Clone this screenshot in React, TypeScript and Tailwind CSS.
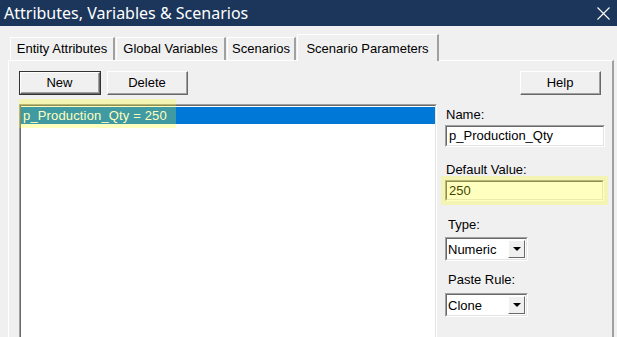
import React from "react";

const font = { fontFamily: '"Liberation Sans", Arial, sans-serif' };

function Raised({ children, w, def }: { children: React.ReactNode; w: string; def?: boolean }) {
  return (
    <div className={`${w} h-[24px] ${def ? "border border-[#333]" : ""} bg-[#f0f0f0]`}>
      <div className="w-full h-full border-t border-l border-t-white border-l-white border-b border-r border-b-[#696969] border-r-[#696969]">
        <div className="w-full h-full border-b border-r border-b-[#a0a0a0] border-r-[#a0a0a0] flex items-center justify-center text-[13px] text-black">
          {children}
        </div>
      </div>
    </div>
  );
}

function Sunken({ children, cls }: { children?: React.ReactNode; cls: string }) {
  return (
    <div className={`${cls} border-t border-l border-t-[#a0a0a0] border-l-[#a0a0a0] border-b border-r border-b-white border-r-white`}>
      <div className="w-full h-full border-t border-l border-t-[#696969] border-l-[#696969] border-b border-r border-b-[#e3e3e3] border-r-[#e3e3e3] bg-white">
        {children}
      </div>
    </div>
  );
}

function Select({ value }: { value: string }) {
  return (
    <Sunken cls="w-[83px] h-[24px]">
      <div className="flex h-full items-center pl-[1px] pr-[1px]">
        <span className="flex-1 text-[13px] text-black leading-none">{value}</span>
        <div className="w-[17px] h-[18px] bg-[#f0f0f0] border-t border-l border-t-white border-l-white border-b border-r border-b-[#696969] border-r-[#696969] flex items-center justify-center">
          <svg width="8" height="4" viewBox="0 0 8 4">
            <polygon points="0,0 8,0 4,4" fill="#000" />
          </svg>
        </div>
      </div>
    </Sunken>
  );
}

export default function App() {
  return (
    <div className="w-[617px] h-[337px] bg-[#f0f0f0] overflow-hidden flex flex-col" style={font}>
      <div className="h-[26px] bg-[#1b365a] flex items-center justify-between pl-[4px] pr-[7px] shrink-0">
        <span className="text-white text-[16px]" style={{ fontFamily: '"Noto Sans", "Liberation Sans", sans-serif' }}>
          Attributes, Variables &amp; Scenarios
        </span>
        <svg width="13" height="13" viewBox="0 0 13 13">
          <path d="M0.5 0.5 L12.5 12.5 M12.5 0.5 L0.5 12.5" stroke="#fff" strokeWidth="1.1" />
        </svg>
      </div>

      <div className="flex items-end h-[34px] pl-[10px] shrink-0">
        <div className="flex items-end h-[23px]">
          <div className="h-[23px] w-[105px] border-t border-l border-t-white border-l-white flex items-center justify-center text-[13px] text-black border-r-2 border-r-[#a0a0a0]">
            Entity Attributes
          </div>
          <div className="h-[23px] w-[110px] ml-[1px] border-t border-l border-t-white border-l-white flex items-center justify-center text-[13px] text-black border-r-2 border-r-[#a0a0a0]">
            Global Variables
          </div>
          <div className="h-[23px] w-[69px] ml-[1px] border-t border-l border-t-white border-l-white flex items-center justify-center text-[13px] text-black border-r-2 border-r-[#a0a0a0]">
            Scenarios
          </div>
        </div>
        <div className="h-[27px] w-[142px] ml-[1px] -mb-[1px] bg-[#f0f0f0] border-t border-l border-t-white border-l-white border-r-2 border-r-[#a0a0a0] flex items-start pt-[4px] justify-center text-[13px] text-black relative z-10">
          Scenario Parameters
        </div>
      </div>

      <div className="ml-[8px] w-[606px] flex-1 border-t border-l border-t-white border-l-white border-r-2 border-r-[#a0a0a0] flex pl-[10px] pt-[10px]">
        <div className="w-[418px] flex flex-col">
          <div className="flex gap-[6px]">
            <Raised w="w-[82px]" def>New</Raised>
            <Raised w="w-[81px]">Delete</Raised>
          </div>
          <div className="relative mt-[9px] flex-1">
            <Sunken cls="w-[418px] h-[300px]">
              <div className="pt-[1px]">
                <div className="h-[17px] bg-[#0078d7] text-white text-[13px] tracking-[0.15px] flex items-center pl-[2px]">
                  p_Production_Qty = 250
                </div>
              </div>
            </Sunken>
            <div className="absolute left-0 top-[-5px] w-[157px] h-[29px] bg-[#ffff00]/25" />
          </div>
        </div>
        <div className="ml-[8px] w-[160px] flex flex-col">
          <div className="flex justify-end pr-[4px]">
            <Raised w="w-[81px]">Help</Raised>
          </div>
          <div className="mt-[12px] text-[13px] text-black leading-[15px] pl-[1px]">Name:</div>
          <Sunken cls="mt-[3px] w-[160px] h-[22px]">
            <div className="text-[13px] text-black pl-[2px] leading-[18px]">p_Production_Qty</div>
          </Sunken>
          <div className="mt-[15px] text-[13px] text-black leading-[15px] pl-[1px]">Default Value:</div>
          <div className="relative mt-[3px]">
            <div className="absolute -left-[4px] -top-[4px] w-[167px] h-[29px] bg-[#ffff00]/25" />
            <Sunken cls="w-[159px] h-[21px]">
              <div className="text-[13px] text-black pl-[2px] leading-[17px]">250</div>
            </Sunken>
          </div>
          <div className="mt-[16px] text-[13px] text-black leading-[15px] pl-[3px]">Type:</div>
          <div className="mt-[5px]">
            <Select value="Numeric" />
          </div>
          <div className="mt-[11px] text-[13px] text-black leading-[15px] pl-[3px]">Paste Rule:</div>
          <div className="mt-[6px]">
            <Select value="Clone" />
          </div>
        </div>
      </div>
    </div>
  );
}
